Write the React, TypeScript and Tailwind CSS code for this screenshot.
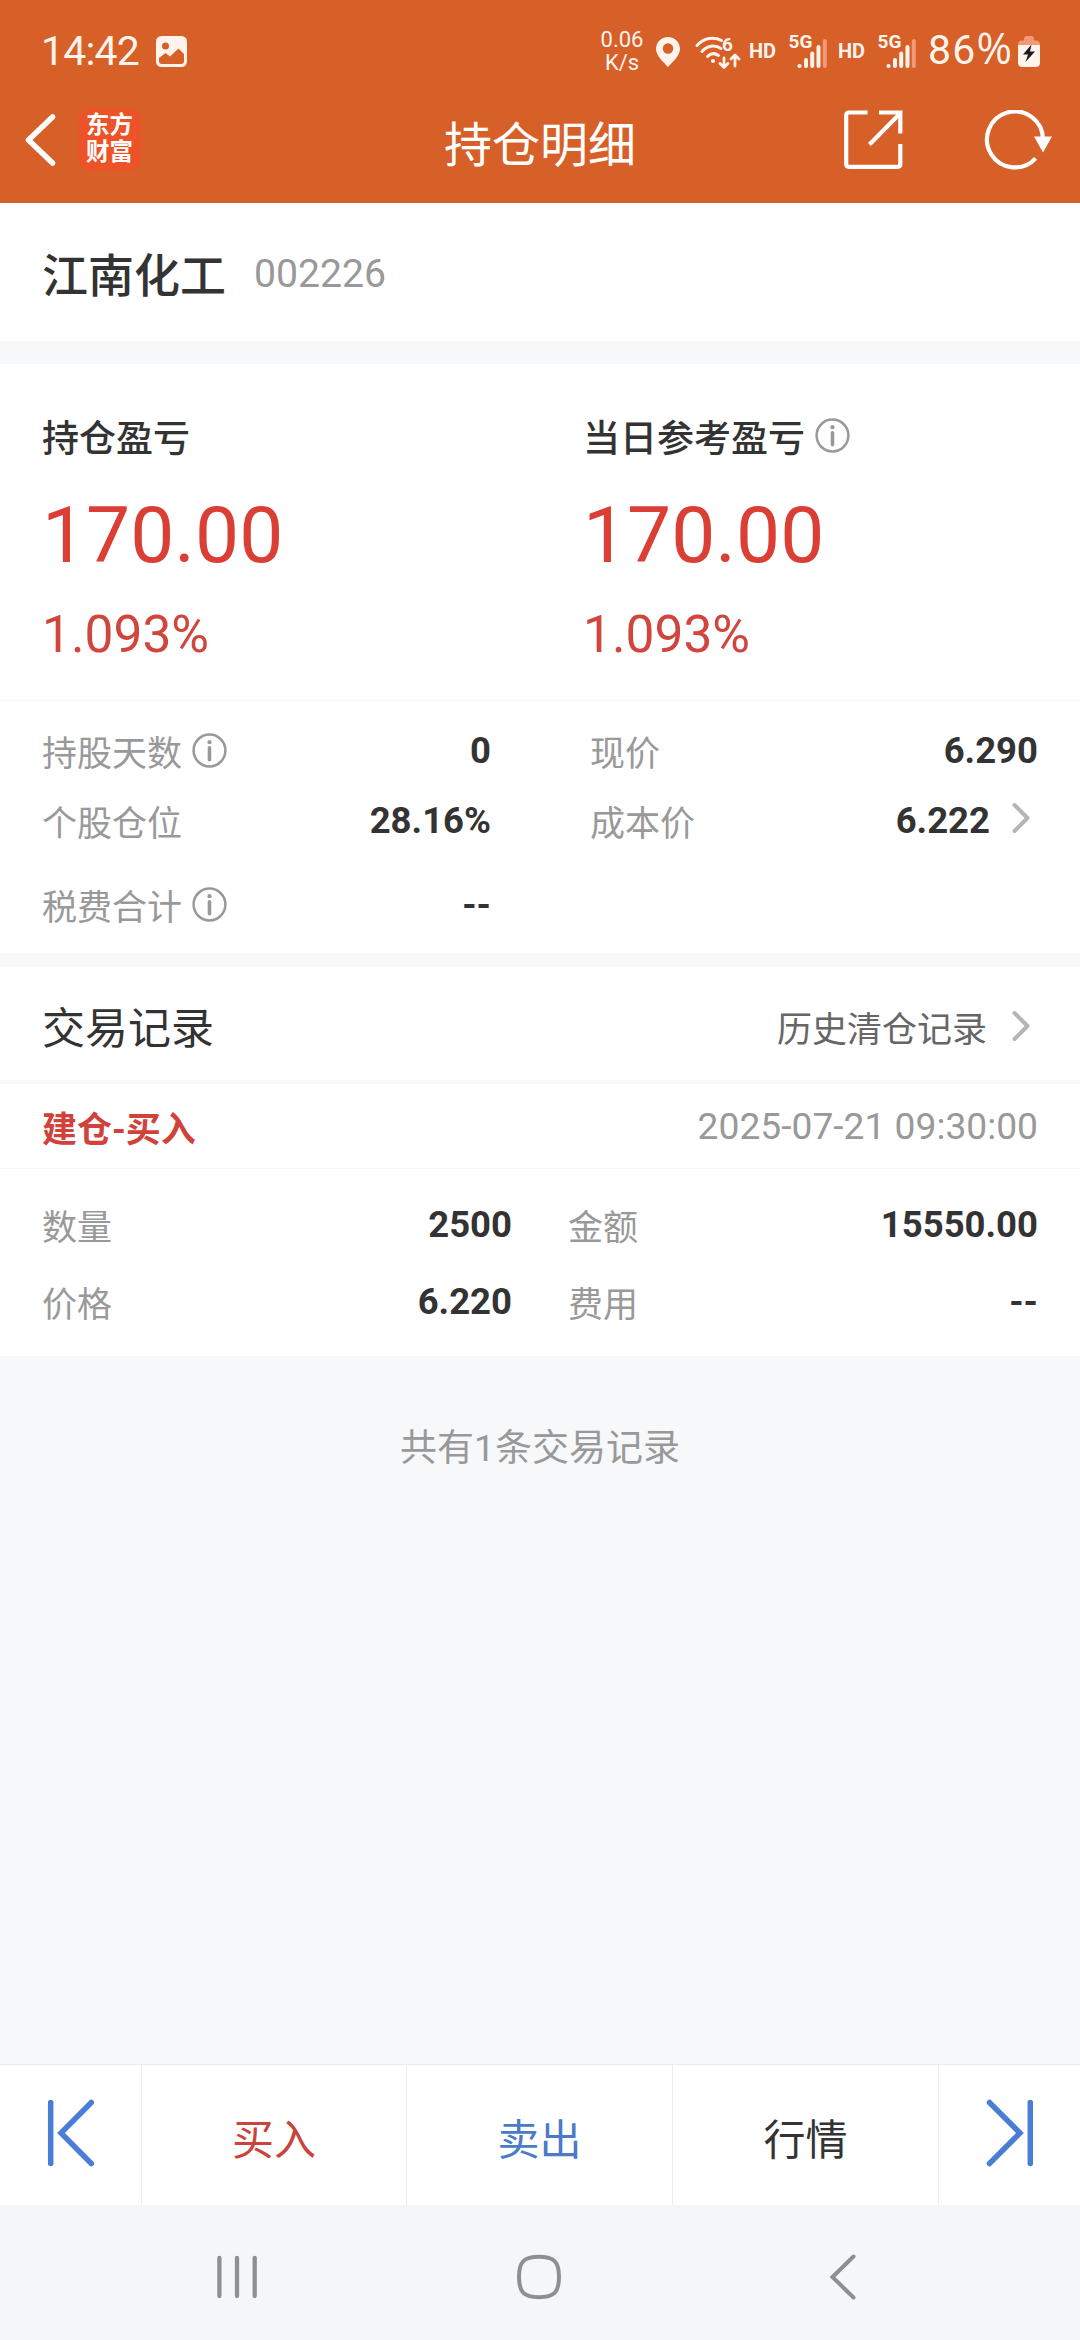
import React from 'react';

const InfoIcon: React.FC<{ className?: string }> = ({ className }) => (
  <svg viewBox="0 0 35 35" fill="none" className={`w-[35px] h-[35px] shrink-0 ${className ?? ''}`}>
    <circle cx="17.5" cy="17.5" r="15.9" stroke="#999999" strokeWidth="2.5" />
    <circle cx="17.5" cy="9.2" r="2.1" fill="#999999" />
    <path d="M17.5 14.8v12" stroke="#999999" strokeWidth="3.6" strokeLinecap="round" />
  </svg>
);

const ArrowRight: React.FC<{ className?: string }> = ({ className }) => (
  <svg viewBox="0 0 20 32" fill="none" className={`w-5 h-8 shrink-0 ${className ?? ''}`}>
    <path d="M3.5 3L16.5 16L3.5 29" stroke="#b5b5b5" strokeWidth="4" strokeLinecap="round" strokeLinejoin="round" />
  </svg>
);

const Signal: React.FC<{ className?: string }> = ({ className }) => (
  <svg viewBox="0 0 39 36" fill="#fff3ec" className={`w-[39px] h-[36px] shrink-0 overflow-visible ${className ?? ''}`}>
    <text x="-0.5" y="14" fontFamily="Roboto" fontSize="19" fontWeight="700">5G</text>
    <circle cx="10.5" cy="32" r="2.1" />
    <rect x="15" y="24" width="4" height="10" rx="2" />
    <rect x="21.2" y="17.5" width="4" height="16.5" rx="2" />
    <rect x="27.5" y="11" width="4" height="23" rx="2" />
    <rect x="33.8" y="5" width="4" height="29" rx="2" fill="#f29a78" />
  </svg>
);

const StatusBar = () => (
  <div className="flex items-center h-[103px] pl-[41px] pr-[40px] text-[#fff3ec]">
    <span className="w-[100px] pb-[1px] text-[41px] leading-[48px] tracking-[-0.8px] whitespace-nowrap">14:42</span>
    <svg viewBox="0 0 31 31" className="w-[31px] h-[31px] ml-[15px]">
      <rect width="31" height="31" rx="5.5" fill="#fff3ec" />
      <circle cx="9.5" cy="10" r="3.5" fill="#d75f28" />
      <path d="M3 22L9.5 17L14 20.5L22.5 12.5L28 18V25Q28 28 25 28H6Q3 28 3 25Z" fill="#d75f28" />
    </svg>
    <div className="ml-auto flex items-center">
      <div className="w-[44px] pb-[1px] text-center text-[22px] leading-[23px]">
        <p>0.06</p>
        <p>K/s</p>
      </div>
      <svg viewBox="0 0 24 30" className="w-6 h-[30px] ml-[12px]">
        <path d="M12 0C5.2 0 0 5.2 0 11.8C0 19 7 24.5 12 30C17 24.5 24 19 24 11.8C24 5.2 18.8 0 12 0Z" fill="#fff3ec" />
        <circle cx="12" cy="11.5" r="5.2" fill="#d75f28" />
      </svg>
      <svg viewBox="0 0 46 34" fill="none" stroke="#fff3ec" className="w-[46px] h-[34px] ml-[15px] overflow-visible">
        <path d="M2 10.500C9 2.500 19 1.500 26.500 5.500M7 16.500C12 10.500 20 9.500 26 13.500M12.500 21.500C16 18 20 18 23.500 20.500" strokeWidth="3" strokeLinecap="round" />
        <circle cx="18" cy="26" r="2.1" fill="#fff3ec" stroke="none" />
        <text x="27" y="15.5" fontFamily="Roboto" fontSize="19" fontWeight="700" fill="#fff3ec" stroke="none">6</text>
        <path d="M29 23V32M25 28.500L29 32.500L33 28.500M40 31V20.500M36 24L40 20L44 24" strokeWidth="2.8" strokeLinecap="round" strokeLinejoin="round" />
      </svg>
      <span className="w-[27px] ml-[8px] pb-[1px] text-[20px] leading-6 font-bold">HD</span>
      <Signal className="ml-[13px]" />
      <span className="w-[27px] ml-[10px] pb-[1px] text-[20px] leading-6 font-bold">HD</span>
      <Signal className="ml-[13px]" />
      <span className="w-[86px] ml-[9px] pb-[3px] text-[41px] leading-[48px] whitespace-nowrap">
        <span className="pl-[2px] tracking-[1.2px]">86</span>
        <span className="font-['Open_Sans',sans-serif] text-[43px] leading-none">%</span>
      </span>
      <svg viewBox="0 0 22 31" className="w-[22px] h-[31px] ml-[6px]">
        <path d="M6 3Q6 0 9 0H13Q16 0 16 3V4.500H18Q22 4.500 22 9H0Q0 4.500 4 4.500H6Z" fill="#f29a78" />
        <path d="M0 9H22V26.500Q22 31 17.500 31H4.500Q0 31 0 26.500Z" fill="#fff3ec" />
        <path d="M13.500 8.500L5 18.500H10L7.500 26L17 15.500H12Z" fill="#1c1c1c" />
      </svg>
    </div>
  </div>
);

const TitleBar = () => (
  <div className="grid grid-cols-[1fr_auto_1fr] items-center h-[72px] pl-[24px] pr-[28px]">
    <div className="flex items-center">
      <svg viewBox="0 0 32 54" fill="none" className="w-8 h-[54px]">
        <path d="M28.500 4L4.500 27L28.500 50" stroke="#fff" strokeWidth="5.5" strokeLinecap="round" strokeLinejoin="round" />
      </svg>
      <div className="ml-[22px] w-[63px] h-[63px] rounded-[13px] bg-[#ec5328] text-white text-center text-[23.5px] leading-[27px] font-bold pt-[4px]">
        <p>东方</p>
        <p>财富</p>
      </div>
    </div>
    <h1 className="text-white text-[48px] leading-[60px] pt-[13px] pl-[4px]">持仓明细</h1>
    <div className="flex items-center justify-end">
      <svg viewBox="0 0 60 60" fill="none" stroke="#fff" strokeWidth="4.2" className="w-[60px] h-[60px]">
        <path d="M24.500 2.500H6Q3.200 2.500 3.200 5.300V54Q3.200 56.800 6 56.800H54.500Q57.300 56.800 57.300 54V34" />
        <path d="M36 2.500H57.300V23.500M26.500 34.500L56.500 4" />
      </svg>
      <svg viewBox="0 0 68 60" fill="none" className="w-[68px] h-[60px] ml-[81px]">
        <path d="M51.600 48.400A28 28 0 1 1 59 29.500" stroke="#fff" strokeWidth="4.2" />
        <path d="M50 26.500H68L59 42.500Z" fill="#fff" />
      </svg>
    </div>
  </div>
);

const Profit: React.FC<{ label: string; info?: boolean }> = ({ label, info }) => (
  <div>
    <div className="flex items-center h-[50px]">
      <span className="pt-[1px] text-[37px] leading-[50px] font-medium text-[#333333]">{label}</span>
      {info && <InfoIcon className="ml-[10px] mb-[8px]" />}
    </div>
    <p className="mt-[21px] text-[78.5px] leading-[100px] text-[#da3e35]">170.00</p>
    <p className="mt-[20px] text-[51.5px] leading-[60px] text-[#d0453d]">1.093%</p>
  </div>
);

interface FieldProps {
  label: string;
  value: string;
  info?: boolean;
  arrow?: boolean;
  className: string;
}

const Field: React.FC<FieldProps> = ({ label, value, info, arrow, className }) => (
  <div className={`flex items-center ${className}`}>
    <span className="pt-[2px] text-[35px] leading-[50px] text-[#999999]">{label}</span>
    {info && <InfoIcon className="ml-[10px] mb-[8px]" />}
    <span className="ml-auto pb-[6px] text-[36.5px] leading-[44px] font-bold text-[#333333]">{value}</span>
    {arrow && <ArrowRight className="ml-[21px] mr-[7px] mb-[12px]" />}
  </div>
);

const BottomBar = () => (
  <div className="flex h-[141px] border-t border-[#e9ebee] bg-white text-[42px] leading-[60px]">
    <button type="button" className="w-[142px] pl-[46px] pb-[4px] border-r border-[#ebedf0]">
      <svg viewBox="0 0 50 70" fill="none" stroke="#4a7ed4" strokeWidth="5.5" strokeLinecap="round" className="w-[50px] h-[70px]">
        <path d="M4.700 4.500V65.500M45.300 4.500L15 35L45.300 65.500" />
      </svg>
    </button>
    <button type="button" className="w-[265px] pt-[12px] border-r border-[#ebedf0] text-[#c9443c]">买入</button>
    <button type="button" className="w-[266px] pt-[12px] border-r border-[#ebedf0] text-[#4a7ac8]">卖出</button>
    <button type="button" className="w-[266px] pt-[12px] border-r border-[#ebedf0] text-[#333333]">行情</button>
    <button type="button" className="w-[141px] pl-[46px] pb-[4px]">
      <svg viewBox="0 0 50 70" fill="none" stroke="#4a7ed4" strokeWidth="5.5" strokeLinecap="round" className="w-[50px] h-[70px]">
        <path d="M45.300 4.500V65.500M4.500 4.500L35 35L4.500 65.500" />
      </svg>
    </button>
  </div>
);

const SystemNav = () => (
  <div className="flex items-center h-[135px] pt-[9px] pl-[217px] bg-[#f5f6f8]">
    <svg viewBox="0 0 40 44" stroke="#8f8f8f" strokeWidth="4.3" strokeLinecap="round" className="w-10 h-11">
      <path d="M2.400 3V41M20 3V41M37.700 3V41" />
    </svg>
    <svg viewBox="0 0 46 46" fill="none" className="w-[46px] h-[46px] ml-[259px]">
      <path d="M23 2.800C38 2.800 43 7.500 43 23S38 43.200 23 43.200S3 38.500 3 23S8 2.800 23 2.800Z" stroke="#8f8f8f" strokeWidth="4" />
    </svg>
    <svg viewBox="0 0 28 46" fill="none" className="w-7 h-[46px] ml-[267px]">
      <path d="M24.500 2.500L3.500 23L24.500 43.500" stroke="#8f8f8f" strokeWidth="4" strokeLinecap="round" />
    </svg>
  </div>
);

const App: React.FC = () => {
  return (
    <div className="w-[1080px] h-[2340px] flex flex-col overflow-hidden bg-[#f7f8fa] font-['Roboto','Noto_Sans_CJK_SC',sans-serif]">
      <header className="h-[203px] bg-[#d75f28]">
        <StatusBar />
        <TitleBar />
      </header>

      <section className="flex items-center h-[138px] pl-[42px] bg-white">
        <h2 className="text-[46px] leading-[60px] pt-[8px] font-medium text-[#333333]">江南化工</h2>
        <span className="ml-[28px] pt-[4px] text-[39.2px] leading-[50px] text-[#999999]">002226</span>
      </section>

      <section className="mt-[23px] grid grid-cols-[541px_1fr] h-[337px] pt-[50px] pl-[42px] bg-white border-b border-[#f5f5f6]">
        <Profit label="持仓盈亏" />
        <Profit label="当日参考盈亏" info />
      </section>

      <section className="h-[252px] pt-[18px] pl-[42px] pr-[42px] bg-white">
        <div className="grid grid-cols-[449px_448px] justify-between">
          <Field className="h-[70px]" label="持股天数" value="0" info />
          <Field className="h-[70px]" label="现价" value="6.290" />
          <Field className="h-[70px]" label="个股仓位" value="28.16%" />
          <Field className="h-[70px]" label="成本价" value="6.222" arrow />
          <Field className="h-[70px] mt-[14px]" label="税费合计" value="--" info />
        </div>
      </section>

      <section className="mt-[14px] bg-white">
        <div className="flex items-center h-[117px] pt-[11px] pl-[42px] pr-[49px] border-b-4 border-[#f7f8f9]">
          <h3 className="text-[43px] leading-[60px] text-[#333333]">交易记录</h3>
          <span className="ml-auto pt-[4px] text-[35px] leading-[50px] text-[#666666]">历史清仓记录</span>
          <ArrowRight className="ml-[24px] mb-[6px]" />
        </div>
        <div className="flex items-center justify-between h-[85px] px-[42px] border-b border-[#f5f5f6]">
          <span className="pt-[9px] text-[35px] leading-[50px] font-bold text-[#d0423a]">建仓-买入</span>
          <span className="text-[37.2px] leading-[50px] text-[#999999]">2025-07-21 09:30:00</span>
        </div>
        <div className="grid grid-cols-[470px_470px] justify-between h-[187px] pt-[20px] pl-[42px] pr-[42px] content-start">
          <Field className="h-[77px]" label="数量" value="2500" />
          <Field className="h-[77px]" label="金额" value="15550.00" />
          <Field className="h-[77px]" label="价格" value="6.220" />
          <Field className="h-[77px]" label="费用" value="--" />
        </div>
      </section>

      <p className="flex-1 pt-[63px] text-center text-[37px] leading-[60px] text-[#999999]">共有1条交易记录</p>

      <BottomBar />
      <SystemNav />
    </div>
  );
};

export default App;
